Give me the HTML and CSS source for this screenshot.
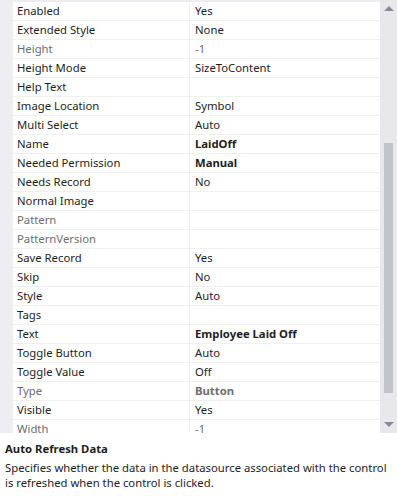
FILE: index.html
```html
<!DOCTYPE html>
<html lang="en">
<head>
    <meta charset="UTF-8">
    <meta name="viewport" content="width=device-width, initial-scale=1.0">
    <title>Properties</title>
    <link rel="stylesheet" href="styles.css">
</head>
<body>
    <div class="panel">
        <div class="grid">
            <div class="row"><span class="name">Enabled</span><span class="value">Yes</span></div>
            <div class="row"><span class="name">Extended Style</span><span class="value">None</span></div>
            <div class="row readonly"><span class="name">Height</span><span class="value">-1</span></div>
            <div class="row"><span class="name">Height Mode</span><span class="value">SizeToContent</span></div>
            <div class="row"><span class="name">Help Text</span><span class="value"></span></div>
            <div class="row"><span class="name">Image Location</span><span class="value">Symbol</span></div>
            <div class="row"><span class="name">Multi Select</span><span class="value">Auto</span></div>
            <div class="row"><span class="name">Name</span><span class="value bold">LaidOff</span></div>
            <div class="row"><span class="name">Needed Permission</span><span class="value bold">Manual</span></div>
            <div class="row"><span class="name">Needs Record</span><span class="value">No</span></div>
            <div class="row"><span class="name">Normal Image</span><span class="value"></span></div>
            <div class="row readonly"><span class="name">Pattern</span><span class="value"></span></div>
            <div class="row readonly"><span class="name">PatternVersion</span><span class="value"></span></div>
            <div class="row"><span class="name">Save Record</span><span class="value">Yes</span></div>
            <div class="row"><span class="name">Skip</span><span class="value">No</span></div>
            <div class="row"><span class="name">Style</span><span class="value">Auto</span></div>
            <div class="row"><span class="name">Tags</span><span class="value"></span></div>
            <div class="row"><span class="name">Text</span><span class="value bold">Employee Laid Off</span></div>
            <div class="row"><span class="name">Toggle Button</span><span class="value">Auto</span></div>
            <div class="row"><span class="name">Toggle Value</span><span class="value">Off</span></div>
            <div class="row readonly"><span class="name">Type</span><span class="value bold">Button</span></div>
            <div class="row"><span class="name">Visible</span><span class="value">Yes</span></div>
            <div class="row readonly"><span class="name">Width</span><span class="value">-1</span></div>
        </div>
        <div class="scrollbar">
            <div class="arrow up"></div>
            <div class="track"><div class="thumb"></div></div>
            <div class="arrow down"></div>
        </div>
    </div>
    <div class="help">
        <div class="help-title">Auto Refresh Data</div>
        <p class="help-text">Specifies whether the data in the datasource associated with the control is refreshed when the control is clicked.</p>
    </div>
</body>
</html>
```

FILE: styles.css
```css
body {
    margin: 0;
    width: 397px;
    height: 496px;
    background: white;
    font-family: "Noto Sans", sans-serif;
    font-size: 11.3px;
    color: #1e1e1e;
    overflow: hidden;
}
.panel {
    display: flex;
    height: 433px;
}
.grid {
    flex: 1;
    padding-top: 2px;
    padding-left: 13px;
    background: #eeeef2;
    overflow: hidden;
}
.row {
    display: flex;
    height: 18px;
    line-height: 18px;
    border-bottom: 1px solid #f0f0f0;
    background: white;
}
.name {
    width: 172px;
    padding-left: 4px;
    border-right: 1px solid #f0f0f0;
    white-space: nowrap;
}
.value {
    flex: 1;
    padding-left: 5px;
    white-space: nowrap;
}
.bold {
    font-weight: bold;
}
.readonly {
    color: #6d6d6d;
}
.scrollbar {
    width: 17px;
    background: #e8e8ec;
    display: flex;
    flex-direction: column;
}
.arrow {
    height: 17px;
    display: flex;
    align-items: center;
    justify-content: center;
}
.arrow::before {
    content: "";
    border-left: 5px solid transparent;
    border-right: 5px solid transparent;
}
.up::before {
    border-bottom: 5px solid #868999;
}
.down::before {
    border-top: 5px solid #868999;
}
.track {
    flex: 1;
    padding-top: 126px;
    padding-left: 4px;
}
.thumb {
    width: 9px;
    height: 250px;
    background: #c2c3c9;
}
.help {
    padding: 8px 5px 0;
}
.help-title {
    font-weight: bold;
    line-height: 16px;
}
.help-text {
    margin: 3px 0 0;
    line-height: 15px;
}
```
